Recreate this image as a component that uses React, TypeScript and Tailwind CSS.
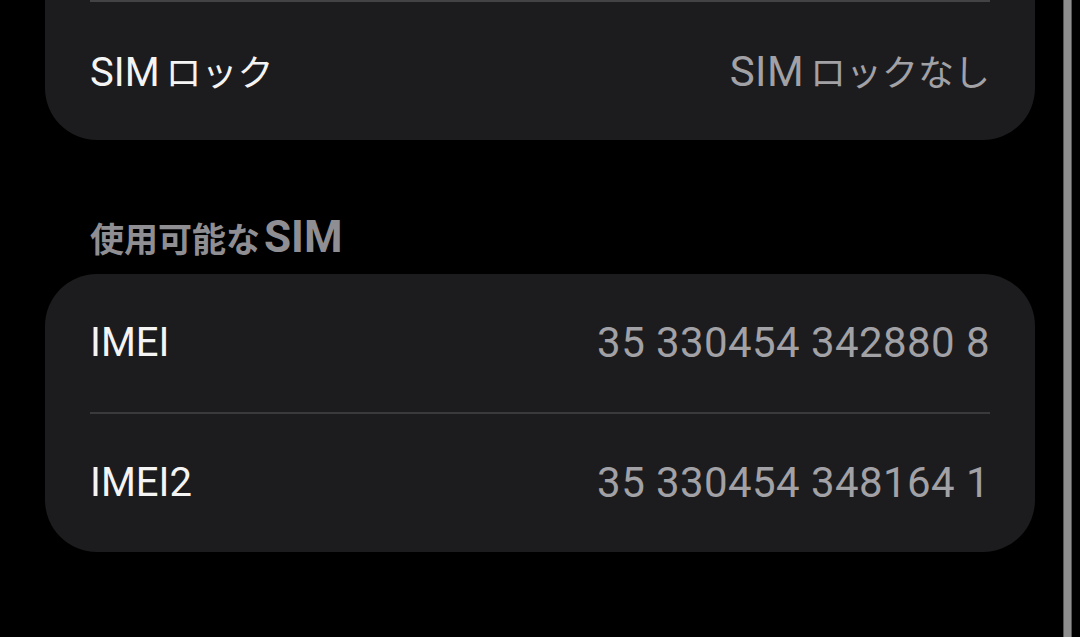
import React from "react";

const latin = "font-['Roboto','Noto_Sans_CJK_JP',sans-serif]";

function Row({ label, value }: { label: React.ReactNode; value: React.ReactNode }) {
  return (
    <div className="flex h-[138px] items-center justify-between px-[45px]">
      <div className="text-[40px] leading-[48px] text-[#f4f4f4]">{label}</div>
      <div className="text-[42px] leading-[48px] tracking-[0.01em] text-[#a1a1a6]">{value}</div>
    </div>
  );
}

const jp = (t: string) => (
  <span className="ml-[6px] font-['Noto_Sans_CJK_JP',sans-serif] text-[36px] tracking-normal">{t}</span>
);

export default function App() {
  return (
    <div className={`flex h-[637px] w-[1080px] overflow-hidden bg-black ${latin}`}>
      <div className="w-[45px] shrink-0" />
      <div className="flex w-[990px] shrink-0 flex-col">
        <div className="rounded-b-[52px] bg-[#1c1c1e]">
          <div className="mx-[45px] h-[2px] bg-[#434346]" />
          <Row
            label={
              <>
                SIM{jp("ロック")}
              </>
            }
            value={
              <>
                SIM{jp("ロックなし")}
              </>
            }
          />
        </div>
        <div className="h-[134px] shrink-0">
          <div className="pl-[45px] pt-[73px] leading-[48px] text-[#8e8e93]">
            <span className="font-['Noto_Sans_CJK_JP',sans-serif] text-[34px] font-bold">使用可能な</span>
            <span className="ml-[4px] text-[44px] font-bold">SIM</span>
          </div>
        </div>
        <div className="rounded-[52px] bg-[#1c1c1e]">
          <Row label="IMEI" value="35 330454 342880 8" />
          <div className="mx-[45px] h-[2px] bg-[#3a3a3c]" />
          <Row label="IMEI2" value="35 330454 348164 1" />
        </div>
      </div>
      <div className="w-[28px] shrink-0" />
      <div className="h-full w-[9px] shrink-0 border-x border-[#555] bg-[#8e8e8e]" />
    </div>
  );
}
